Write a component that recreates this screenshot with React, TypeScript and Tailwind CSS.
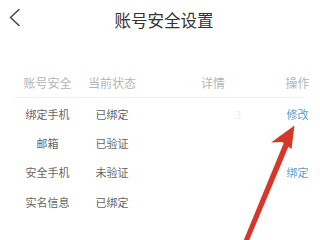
import React from "react";

const rows = [
  { name: "绑定手机", status: "已绑定", detail: "3", action: "修改" },
  { name: "邮箱", status: "已验证", detail: "", action: "" },
  { name: "安全手机", status: "未验证", detail: "", action: "绑定" },
  { name: "实名信息", status: "已绑定", detail: "", action: "" },
];

export default function App() {
  return (
    <div
      className="relative w-[320px] h-[240px] overflow-hidden bg-white"
      style={{ fontFamily: '"Noto Sans CJK SC", "Noto Sans", sans-serif' }}
    >
      <div className="flex h-[40px] items-center">
        <div className="flex w-[30px] justify-start pl-[8px] mb-[6px]">
          <svg width="13" height="19" viewBox="0 0 13 19">
            <path d="M11 1.5 L2.5 9.5 L11 17.5" fill="none" stroke="#4a4a4a" strokeWidth="1.6" strokeLinecap="round" strokeLinejoin="round" />
          </svg>
        </div>
        <div className="flex-1 text-center text-[16.5px] leading-[20px] text-[#333333]">账号安全设置</div>
        <div className="w-[22px]" />
      </div>

      <div className="mt-[33px] px-[15px]">
        <div className="grid grid-cols-[65px_64px_138px_31px] h-[25px] items-start border-b border-[#f0f0f0] text-[12px] leading-[20px] text-[#b4b4b4]">
          <div className="text-center">账号安全</div>
          <div className="text-center">当前状态</div>
          <div className="text-center">详情</div>
          <div className="text-center">操作</div>
        </div>
        <div className="mt-[1px]">
          {rows.map((r) => (
            <div
              key={r.name}
              className="grid grid-cols-[65px_64px_138px_31px] h-[29.3px] items-center text-[11px] leading-[16px] text-[#666666]"
            >
              <div className="text-center">{r.name}</div>
              <div className="text-center">{r.status}</div>
              <div className="text-center text-[#ededed] pl-[50px]">{r.detail}</div>
              <div className="text-center text-[#5d9fca]">{r.action}</div>
            </div>
          ))}
        </div>
      </div>

      <svg className="absolute left-0 top-0" width="320" height="240" viewBox="0 0 320 240">
        <path d="M243 242 L248 243 L290 143 L285 140 Z" fill="#d4382a" />
        <path d="M294.5 125.5 L271 142.5 L282 142 L291.5 149 Z" fill="#d4382a" />
      </svg>
    </div>
  );
}
